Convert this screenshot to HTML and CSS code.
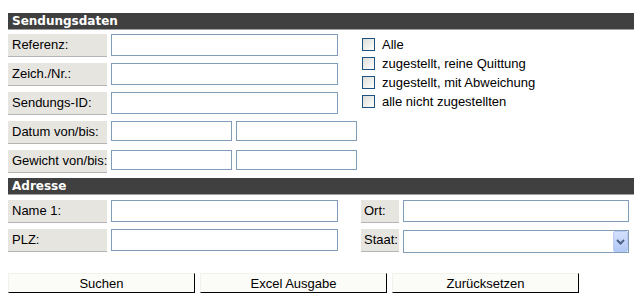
FILE: index.html
```html
<!DOCTYPE html>
<html lang="de">
<head>
    <meta charset="UTF-8">
    <title>Sendungsverfolgung</title>
    <link rel="stylesheet" href="styles.css">
</head>
<body>
    <form class="search-form">
        <h2 class="section-head">Sendungsdaten</h2>
        <div class="grid sendung">
            <label class="field-label" for="ref">Referenz:</label>
            <input type="text" id="ref" class="field wide">

            <label class="field-label" for="zeich">Zeich./Nr.:</label>
            <input type="text" id="zeich" class="field wide">

            <label class="field-label" for="sid">Sendungs-ID:</label>
            <input type="text" id="sid" class="field wide">

            <label class="field-label" for="dvon">Datum von/bis:</label>
            <input type="text" id="dvon" class="field small">
            <input type="text" class="field small">

            <label class="field-label" for="gvon">Gewicht von/bis:</label>
            <input type="text" id="gvon" class="field small">
            <input type="text" class="field small">

            <div class="status">
                <label class="check"><input type="checkbox"> Alle</label>
                <label class="check"><input type="checkbox"> zugestellt, reine Quittung</label>
                <label class="check"><input type="checkbox"> zugestellt, mit Abweichung</label>
                <label class="check"><input type="checkbox"> alle nicht zugestellten</label>
            </div>
        </div>

        <h2 class="section-head">Adresse</h2>
        <div class="grid adresse">
            <label class="field-label" for="name1">Name 1:</label>
            <input type="text" id="name1" class="field">
            <label class="field-label short" for="ort">Ort:</label>
            <input type="text" id="ort" class="field">

            <label class="field-label" for="plz">PLZ:</label>
            <input type="text" id="plz" class="field">
            <label class="field-label short" for="staat">Staat:</label>
            <div class="select-wrap">
                <select id="staat" class="field select"><option></option></select>
                <span class="select-arrow">
                    <svg width="9" height="6" viewBox="0 0 9 6"><path d="M1 1 L4.5 4.5 L8 1" fill="none" stroke="#4d6185" stroke-width="2"/></svg>
                </span>
            </div>
        </div>

        <div class="buttons">
            <button type="button" class="btn">Suchen</button>
            <button type="button" class="btn">Excel Ausgabe</button>
            <button type="button" class="btn">Zurücksetzen</button>
        </div>
    </form>
</body>
</html>
```

FILE: styles.css
```css
body {
    margin: 8px;
    background-color: #fff;
    color: #000;
    font-family: "Liberation Sans", Arial, sans-serif;
    font-size: 13px;
}

.search-form {
    margin-top: 5px;
    width: 629px;
}

/* Balken */
.section-head {
    margin: 0;
    height: 16px;
    line-height: 16px;
    padding-left: 4px;
    background-color: #404040;
    border-bottom: 1px solid #a0a0a0;
    border-right: 1px solid #a0a0a0;
    color: #fff;
    font-family: "DejaVu Sans", Verdana, sans-serif;
    font-size: 12px;
    font-weight: bold;
}

.grid {
    display: grid;
    column-gap: 4px;
    row-gap: 6px;
    align-items: start;
}

.sendung {
    grid-template-columns: 99px 121px 121px 1fr;
    padding: 4px 0 5px;
}

.sendung .field-label {
    grid-column: 1;
}

.adresse {
    grid-template-columns: 99px 227px 57px 226px;
    padding: 5px 0 0;
}

.field-label {
    height: 23px;
    line-height: 22px;
    padding-left: 4px;
    box-sizing: border-box;
    background-color: #e7e5e0;
    border-bottom: 1px solid #b4b4b4;
    white-space: nowrap;
}

.field-label.short {
    margin-left: 19px;
    padding-left: 3px;
    width: 38px;
}

.field {
    box-sizing: border-box;
    height: 22px;
    margin: 0;
    padding: 1px 3px;
    border: 1px solid #7f9db9;
    background-color: #fff;
    font-family: inherit;
    font-size: 13px;
}

.field.wide {
    grid-column: span 2;
    width: 227px;
}

.field.small {
    height: 20px;
}

/* Status Checkboxen */
.status {
    grid-column: 4;
    grid-row: 1 / 4;
    padding: 1px 0 0 1px;
}

.check {
    display: flex;
    align-items: center;
    gap: 7px;
    height: 19px;
}

.check input {
    appearance: none;
    -webkit-appearance: none;
    width: 13px;
    height: 13px;
    margin: 0;
    border: 1px solid #1c5180;
    background: linear-gradient(135deg, #dcdcd7 0%, #f4f4f2 70%, #fff 100%);
}

/* Auswahl Staat */
.select-wrap {
    position: relative;
    width: 226px;
}

.select {
    appearance: none;
    -webkit-appearance: none;
    width: 226px;
    height: 23px;
    margin-top: 1px;
}

.select-arrow {
    position: absolute;
    top: 2px;
    right: 1px;
    width: 15px;
    height: 21px;
    box-sizing: border-box;
    display: flex;
    align-items: center;
    justify-content: center;
    border: 1px solid #b9cbf3;
    border-radius: 2px;
    background: linear-gradient(#d3e0fd, #b1c8f7);
    pointer-events: none;
}

/* Knöpfe */
.buttons {
    display: flex;
    gap: 5px;
    margin-top: 20px;
}

.btn {
    width: 187px;
    height: 20px;
    padding: 0;
    background-color: #fbfbf7;
    border-top: 1px solid #f2f2ec;
    border-left: 1px solid #f2f2ec;
    border-right: 1px solid #000;
    border-bottom: 1px solid #000;
    font-family: "Liberation Sans", Arial, sans-serif;
    font-size: 13px;
    color: #000;
}
```
